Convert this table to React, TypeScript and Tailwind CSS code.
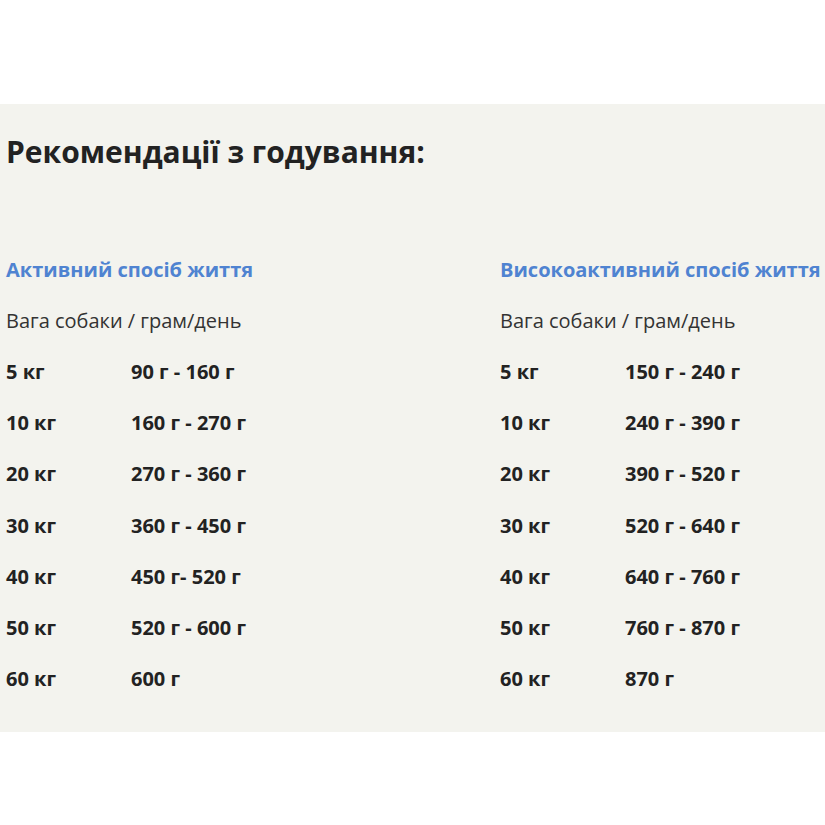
const active = [
  ["5 кг", "90 г - 160 г"],
  ["10 кг", "160 г - 270 г"],
  ["20 кг", "270 г - 360 г"],
  ["30 кг", "360 г - 450 г"],
  ["40 кг", "450 г- 520 г"],
  ["50 кг", "520 г - 600 г"],
  ["60 кг", "600 г"],
];

const highly = [
  ["5 кг", "150 г - 240 г"],
  ["10 кг", "240 г - 390 г"],
  ["20 кг", "390 г - 520 г"],
  ["30 кг", "520 г - 640 г"],
  ["40 кг", "640 г - 760 г"],
  ["50 кг", "760 г - 870 г"],
  ["60 кг", "870 г"],
];

const Column = ({ title, rows }: { title: string; rows: string[][] }) => (
  <div className="flex flex-col">
    <div className="flex h-[51px] items-center text-[20px] font-bold whitespace-nowrap text-[#4f83d1]">
      {title}
    </div>
    <div className="flex h-[51px] items-center text-[20px] text-[#333]">Вага собаки / грам/день</div>
    {rows.map(([w, g]) => (
      <div key={w} className="flex h-[51.3px] items-center text-[20px] font-bold">
        <span className="w-[125px]">{w}</span>
        <span>{g}</span>
      </div>
    ))}
  </div>
);

export default function App() {
  return (
    <div className="min-h-[825px] bg-white pt-[104px] font-['Open_Sans',sans-serif] text-[#222]">
      <div className="bg-[#f3f3ee] pl-[6px] pt-[27px] pb-[27px]">
        <h2 className="h-[42px] leading-[42px] text-[30px] font-bold text-[#222]">
          Рекомендації з годування:
        </h2>
        <div className="mt-[71px] grid grid-cols-[494px_1fr]">
          <Column title="Активний спосіб життя" rows={active} />
          <Column title="Високоактивний спосіб життя" rows={highly} />
        </div>
      </div>
    </div>
  );
}
